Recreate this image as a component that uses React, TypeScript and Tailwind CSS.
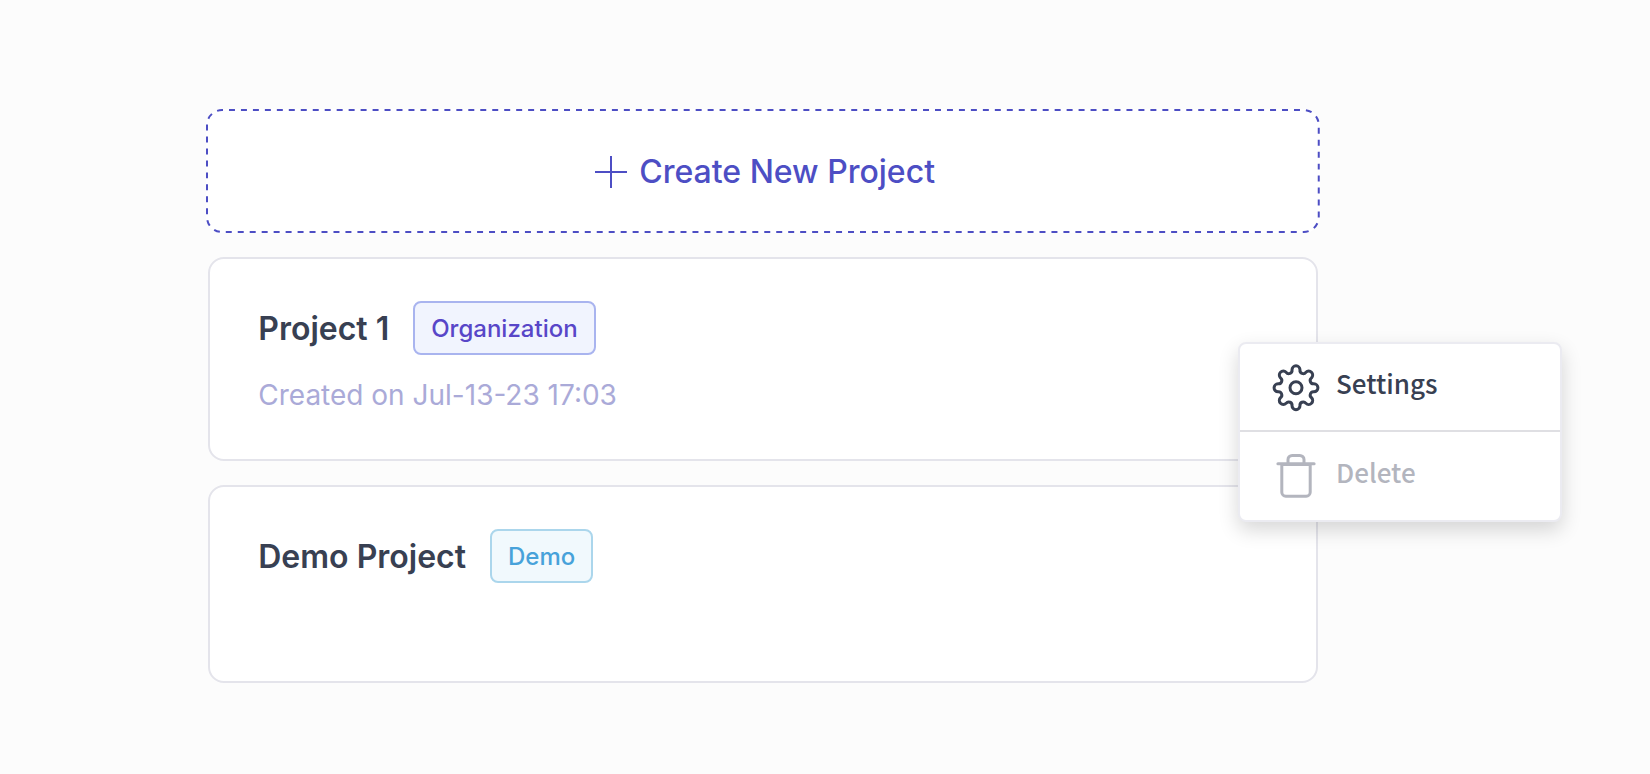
import React from "react";

const TOOTH_COUNT = 8;

function gearPath(): string {
  const cap = { distance: 18.2, radius: 3.9 };
  const valley = { distance: 19.2, radius: 3.3 };
  const step = (Math.PI * 2) / TOOTH_COUNT;
  const at = (distance: number, angle: number) => [
    24 + distance * Math.cos(angle),
    24.8 + distance * Math.sin(angle),
  ];
  const join = (capAngle: number, valleyAngle: number) => {
    const [cx, cy] = at(cap.distance, capAngle);
    const [vx, vy] = at(valley.distance, valleyAngle);
    const t = cap.radius / (cap.radius + valley.radius);
    return `${(cx + (vx - cx) * t).toFixed(2)} ${(cy + (vy - cy) * t).toFixed(2)}`;
  };
  let d = `M${join(0, -step / 2)}`;
  for (let i = 0; i < TOOTH_COUNT; i++) {
    const a = i * step;
    d += `A${cap.radius} ${cap.radius} 0 1 1 ${join(a, a + step / 2)}`;
    d += `A${valley.radius} ${valley.radius} 0 0 0 ${join(a + step, a + step / 2)}`;
  }
  return d + "Z";
}

function GearIcon() {
  return (
    <svg className="size-12 shrink-0 overflow-visible" viewBox="0 0 48 48" fill="none" stroke="currentColor" strokeWidth="3" aria-hidden="true">
      <path d={gearPath()} />
      <circle cx="24" cy="24.8" r="6" />
    </svg>
  );
}

function TrashIcon() {
  return (
    <svg className="size-12 shrink-0" viewBox="0 0 48 48" fill="none" stroke="currentColor" strokeWidth="3" strokeLinecap="round" aria-hidden="true">
      <path d="M5.9 11.8H42.1" />
      <path d="M9.8 12.6H38.2V40.2A4 4 0 0 1 34.2 44.2H13.8A4 4 0 0 1 9.8 40.2Z" />
      <path d="M16 12V7.6A4.2 4.2 0 0 1 20.2 3.4H27.8A4.2 4.2 0 0 1 32 7.6V12" />
    </svg>
  );
}

function PlusIcon() {
  return (
    <svg className="size-8 shrink-0" viewBox="0 0 32 32" stroke="currentColor" strokeWidth="2" aria-hidden="true">
      <path d="M16 0V32M0 16H32" />
    </svg>
  );
}

function DashedOutline() {
  return (
    <svg className="pointer-events-none absolute inset-0 size-full p-px" overflow="visible" fill="none" stroke="currentColor" strokeWidth="2" aria-hidden="true">
      <rect width="100%" height="100%" rx="15" pathLength="2448" strokeDasharray="6 6" strokeDashoffset="5" />
    </svg>
  );
}

type ProjectCardProps = {
  name: string;
  tag: string;
  tagClass: string;
  created?: string;
  children?: React.ReactNode;
};

function ProjectCard({ name, tag, tagClass, created, children }: ProjectCardProps) {
  return (
    <article className="relative mx-0.5 flex min-h-[198px] flex-col gap-[18px] rounded-2xl border-2 border-[#e4e4eb] bg-white px-12 py-[42px]">
      <div className="flex items-center gap-6">
        <h2 className="pt-0.5 text-[32px] leading-[52px] font-semibold text-[#384052]">{name}</h2>
        <span className={`rounded-lg border-2 px-4 pt-0.5 text-2xl leading-[48px] font-medium ${tagClass}`}>{tag}</span>
      </div>
      {created && <p className="text-[28px] leading-[44px] text-[#aaaad8]">{created}</p>}
      {children}
    </article>
  );
}

function ProjectMenu() {
  return (
    <div
      role="menu"
      className="absolute top-[83px] -right-[246px] z-10 w-[324px] rounded-lg border-2 border-[#ebebf1] bg-white font-['Noto_Sans_CJK_SC',sans-serif] text-[26px] leading-9 font-medium shadow-[0_8px_20px_rgba(0,0,0,0.16)]"
    >
      <button role="menuitem" className="flex h-[88px] w-full items-center gap-4 border-b-2 border-[#dfdfe3] px-8 text-[#384052]">
        <GearIcon />
        <span className="pb-2">Settings</span>
      </button>
      <button role="menuitem" disabled className="flex h-[88px] w-full items-center gap-4 px-8 text-[#b3b5be]">
        <TrashIcon />
        <span className="pb-2">Delete</span>
      </button>
    </div>
  );
}

export default function App() {
  return (
    <main className="min-h-screen bg-[#fcfcfc] pt-[109px] pr-[20%] pb-20 pl-[12.5%] font-['Inter',sans-serif]">
      <div className="flex flex-col gap-6">
        <button className="relative flex h-[124px] items-center justify-center gap-3 rounded-2xl bg-white pt-0.5 pl-1 text-[32px] leading-10 font-medium text-[#4d4ec4]">
          <DashedOutline />
          <PlusIcon />
          Create New Project
        </button>
        <ProjectCard
          name="Project 1"
          tag="Organization"
          tagClass="border-[#a9b4ef] bg-[#f1f4fe] text-[#5846c8]"
          created="Created on Jul-13-23 17:03"
        >
          <ProjectMenu />
        </ProjectCard>
        <ProjectCard
          name="Demo Project"
          tag="Demo"
          tagClass="border-[#abd6ec] bg-[#f1f9fd] text-[#47a2da]"
        />
      </div>
    </main>
  );
}
